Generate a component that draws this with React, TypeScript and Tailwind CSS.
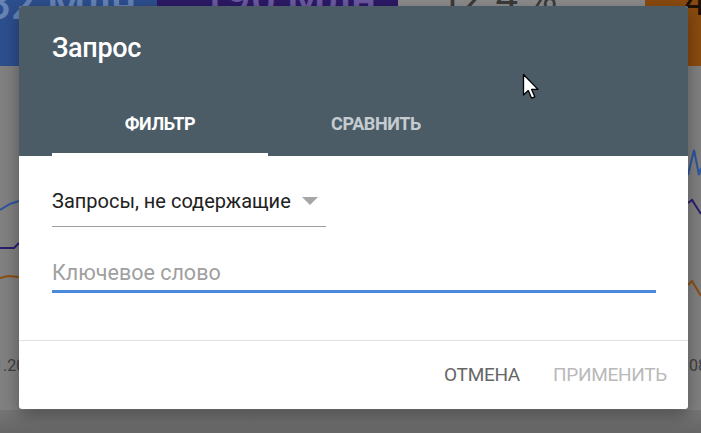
function Cursor() {
  return (
    <svg width="20" height="28" viewBox="0 0 20 28" className="absolute left-[522px] top-[73px]">
      <path
        d="M1.5 1.5 L1.5 22 L6.3 17.6 L9.6 25.2 L12.8 23.8 L9.6 16.4 L16 16.4 Z"
        fill="#ffffff"
        stroke="#000000"
        strokeWidth="1.3"
        strokeLinejoin="round"
      />
    </svg>
  )
}

function Backdrop() {
  return (
    <div className="flex h-full flex-col bg-[#818181]">
      <div className="flex h-[66px]">
        <div className="w-[157px] overflow-hidden bg-[#2d4f8e] text-[44px] font-medium leading-none text-[#6784b6]">
          <div className="-ml-[14px] -mt-[18px]">32 Млн</div>
        </div>
        <div className="w-[241px] overflow-hidden bg-[#2c1a66] text-[44px] font-medium leading-none text-[#6c5aa0]">
          <div className="-mt-[24px] pl-[44px]">190 Млн</div>
        </div>
        <div className="w-[247px] overflow-hidden bg-[#8c8c8c] text-[40px] leading-none text-[#3b3b3b]">
          <div className="-mt-[22px] pl-[42px]">12.4 %</div>
        </div>
        <div className="flex-1 overflow-hidden bg-[#8a4b0f] text-[40px] leading-none text-[#1d1208]">
          <div className="-mt-[18px] pl-[39px]">4</div>
        </div>
      </div>
      <div className="relative flex-1">
        <svg width="701" height="344" viewBox="0 66 701 344" className="block">
          <path d="M0 210 L10 204 L19 201" fill="none" stroke="#2f55a0" strokeWidth="2" />
          <path d="M0 248 L14 248 L19 243" fill="none" stroke="#2f1c70" strokeWidth="2" />
          <path d="M0 278 L8 276 L19 277" fill="none" stroke="#8e4d12" strokeWidth="2" />
          <path d="M688 175 L694 150 L699 175 L701 168" fill="none" stroke="#2f55a0" strokeWidth="2" />
          <path d="M688 203 L692 200 L701 214" fill="none" stroke="#2f1c70" strokeWidth="2" />
          <path d="M688 285 L692 281 L701 296" fill="none" stroke="#8e4d12" strokeWidth="2" />
        </svg>
        <div className="absolute left-[-6px] top-[288px] text-[16px] text-[#3f3f3f]">1.20</div>
        <div className="absolute left-[689px] top-[288px] text-[16px] text-[#3f3f3f]">08</div>
      </div>
      <div className="h-[23px] bg-gradient-to-b from-[#767676] to-[#666666]" />
    </div>
  )
}

export default function App() {
  return (
    <div className="relative h-[433px] w-[701px] overflow-hidden font-['Roboto',sans-serif]">
      <Backdrop />

      <div className="absolute left-[19px] top-[6px] flex h-[403px] w-[669px] flex-col overflow-hidden rounded-[3px] bg-white shadow-[0_6px_18px_rgba(0,0,0,0.35)]">
        <div className="bg-[#4b5c67] pl-[33px] pt-[27px]">
          <h2 className="text-[27px] font-medium leading-[30px] tracking-[-0.3px] text-white">Запрос</h2>
          <div className="mt-[39px] flex">
            <div className="flex w-[216px] flex-col">
              <span className="pb-[19px] pt-[12px] text-center text-[18px] font-bold leading-[20px] tracking-[-0.4px] text-white">
                ФИЛЬТР
              </span>
              <span className="h-[3px] bg-white" />
            </div>
            <div className="flex w-[216px] flex-col">
              <span className="pb-[19px] pt-[12px] text-center text-[18px] font-bold leading-[20px] tracking-[-0.4px] text-[#c5ccd1]">
                СРАВНИТЬ
              </span>
              <span className="h-[3px]" />
            </div>
          </div>
        </div>

        <div className="flex flex-1 flex-col px-[33px] pt-[32px]">
          <div className="flex w-[274px] items-center justify-between border-b border-[#9e9e9e] pb-[12px]">
            <span className="text-[20px] leading-[26px] text-[#212121]">Запросы, не содержащие</span>
            <svg width="16" height="8" viewBox="0 0 16 8" className="mr-[8px]">
              <path d="M0 0 L16 0 L8 8 Z" fill="#a6a6a6" />
            </svg>
          </div>
          <div className="mt-[33px] w-[604px] border-b-[3px] border-[#4a89dc] pb-[3px]">
            <span className="text-[21.5px] leading-[26px] text-[#a0a0a0]">Ключевое слово</span>
          </div>
        </div>

        <div className="flex h-[69px] items-center justify-end gap-[33px] border-t border-[#e0e0e0] pr-[21px]">
          <button className="text-[19px] uppercase tracking-[-0.3px] text-[#666666]">Отмена</button>
          <button className="text-[19px] uppercase tracking-[-0.3px] text-[#b9b9b9]">Применить</button>
        </div>
      </div>

      <Cursor />
    </div>
  )
}
